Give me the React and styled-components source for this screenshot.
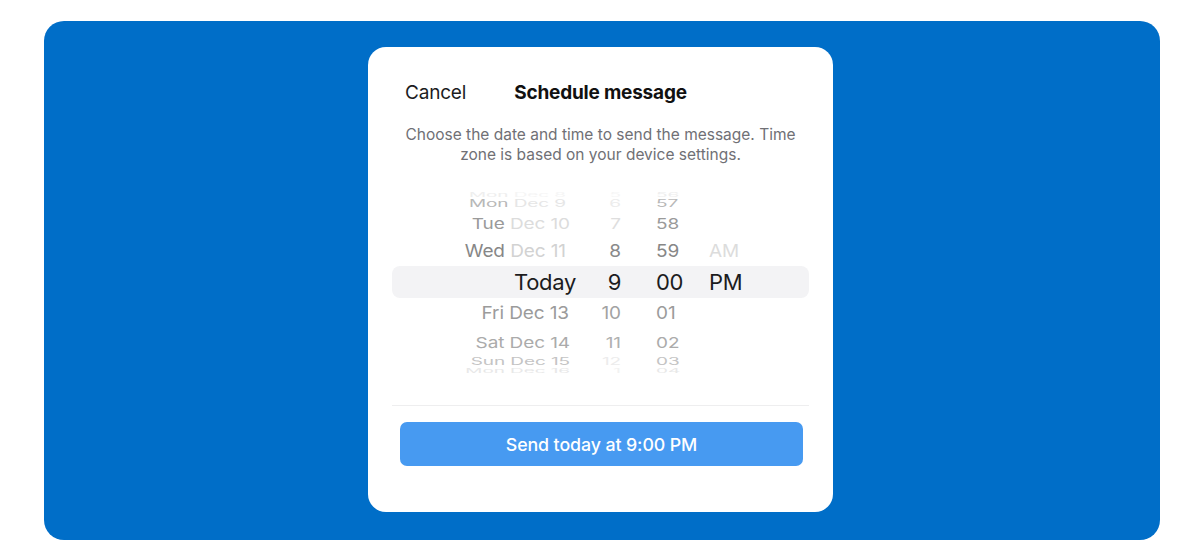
import styled, { createGlobalStyle } from "styled-components";

const GlobalStyle = createGlobalStyle`
  body {
    margin: 0;
    background: #ffffff;
    font-family: Inter, "Liberation Sans", sans-serif;
  }
`;

const Page = styled.div`
  padding: 21px 40px 19px 44px;
`;

const Stage = styled.div`
  background: #006ec8;
  border-radius: 20px;
  height: 519px;
  display: flex;
  justify-content: center;
  align-items: flex-start;
  padding: 26px 3px 0 0;
  box-sizing: border-box;
`;

const Sheet = styled.div`
  width: 465px;
  height: 465px;
  background: #ffffff;
  border-radius: 18px;
  padding: 34px 24px 46px;
  box-sizing: border-box;
  display: flex;
  flex-direction: column;
`;

const Header = styled.div`
  display: grid;
  grid-template-columns: 1fr auto 1fr;
  align-items: center;
  padding: 0 13px;
  height: 24px;
  line-height: 24px;
`;

const Cancel = styled.span`
  font-size: 19px;
  color: #1c1c1e;
  letter-spacing: -0.2px;
`;

const Title = styled.h1`
  margin: 0;
  font-size: 19px;
  font-weight: 700;
  color: #111;
  letter-spacing: -0.2px;
`;

const Hint = styled.p`
  margin: 20px 0 0;
  font-size: 15.5px;
  line-height: 20px;
  color: #707075;
  text-align: center;
`;

const Wheel = styled.div`
  margin-top: 23px;
  display: flex;
  flex-direction: column;
`;

const Row = styled.div`
  height: ${(p) => p.$h}px;
  line-height: ${(p) => Math.floor(p.$h / p.$scale)}px;
  display: grid;
  grid-template-columns: 184px 45px 88px auto;
  align-items: center;
  font-size: ${(p) => (p.$active ? 22 : 19)}px;
  letter-spacing: ${(p) => (p.$active ? "-0.3px" : "-0.1px")};
  transform: scaleY(${(p) => p.$scale});
  color: ${(p) => p.$tone};
  white-space: nowrap;
`;

const ActiveRow = styled(Row)`
  margin: 2px 0;
  background: #f3f3f5;
  border-radius: 8px;
`;

const DateCell = styled.span`
  text-align: right;
  padding-right: ${(p) => p.$inset || 0}px;
`;

const Faint = styled.span`
  color: ${(p) => p.$tone};
`;

const Hour = styled.span`
  text-align: right;
  color: ${(p) => p.$tone};
`;

const Minute = styled.span`
  padding-left: 35px;
  color: ${(p) => p.$tone};
`;

const Period = styled.span`
  color: ${(p) => p.$tone};
`;

const Divider = styled.hr`
  margin: 32px 0 0;
  border: 0;
  height: 1px;
  background: #eeeeef;
`;

const SendButton = styled.button`
  margin: 16px 6px 0 8px;
  height: 44px;
  border: 0;
  border-radius: 7px;
  background: #479af1;
  color: #ffffff;
  font-family: inherit;
  font-size: 17.8px;
  font-weight: 500;
  letter-spacing: -0.1px;
`;

const rows = [
  { h: 9, scale: 0.3, day: "Mon", rest: "Dec 8", hour: "5", min: "56", tone: "#eeeeee", faint: "#f5f5f5", hourTone: "#f6f6f6", inset: 10 },
  { h: 9, scale: 0.55, day: "Mon", rest: "Dec 9", hour: "6", min: "57", tone: "#b8b8b8", faint: "#e6e6e6", hourTone: "#ececec", inset: 10 },
  { h: 30, scale: 0.78, day: "Tue", rest: "Dec 10", hour: "7", min: "58", tone: "#9a9a9a", faint: "#dcdcdc", hourTone: "#dedede", inset: 6 },
  { h: 28, scale: 0.94, day: "Wed", rest: "Dec 11", hour: "8", min: "59", period: "AM", tone: "#878787", faint: "#d2d2d2", hourTone: "#8a8a8a", periodTone: "#dcdcdc", inset: 10 },
];

const lower = [
  { h: 26, scale: 0.92, day: "Fri", rest: "Dec 13", hour: "10", min: "01", tone: "#9b9b9b", faint: "#9b9b9b", hourTone: "#a2a2a2", inset: 7 },
  { h: 28, scale: 0.78, day: "Sat", rest: "Dec 14", hour: "11", min: "02", tone: "#ababab", faint: "#ababab", hourTone: "#b0b0b0", inset: 6 },
  { h: 11, scale: 0.55, day: "Sun", rest: "Dec 15", hour: "12", min: "03", tone: "#c4c4c4", faint: "#c4c4c4", hourTone: "#ececec", inset: 6 },
  { h: 8, scale: 0.3, day: "Mon", rest: "Dec 16", hour: "1", min: "04", tone: "#e8e8e8", faint: "#e8e8e8", hourTone: "#f2f2f2", inset: 6 },
];

function WheelRow({ r }) {
  return (
    <Row $h={r.h} $scale={r.scale} $tone={r.tone}>
      <DateCell $inset={r.inset}>
        {r.day} <Faint $tone={r.faint}>{r.rest}</Faint>
      </DateCell>
      <Hour $tone={r.hourTone}>{r.hour}</Hour>
      <Minute $tone={r.tone}>{r.min}</Minute>
      <Period $tone={r.periodTone}>{r.period}</Period>
    </Row>
  );
}

export default function App() {
  return (
    <>
      <GlobalStyle />
      <Page>
        <Stage>
          <Sheet>
            <Header>
              <Cancel>Cancel</Cancel>
              <Title>Schedule message</Title>
              <span />
            </Header>
            <Hint>
              Choose the date and time to send the message. Time
              <br />
              zone is based on your device settings.
            </Hint>
            <Wheel>
              {rows.map((r) => (
                <WheelRow key={r.rest} r={r} />
              ))}
              <ActiveRow $h={32} $scale={1} $tone="#1c1c1e" $active>
                <DateCell>Today</DateCell>
                <Hour>9</Hour>
                <Minute>00</Minute>
                <Period>PM</Period>
              </ActiveRow>
              {lower.map((r) => (
                <WheelRow key={r.rest} r={r} />
              ))}
            </Wheel>
            <Divider />
            <SendButton>Send today at 9:00 PM</SendButton>
          </Sheet>
        </Stage>
      </Page>
    </>
  );
}
